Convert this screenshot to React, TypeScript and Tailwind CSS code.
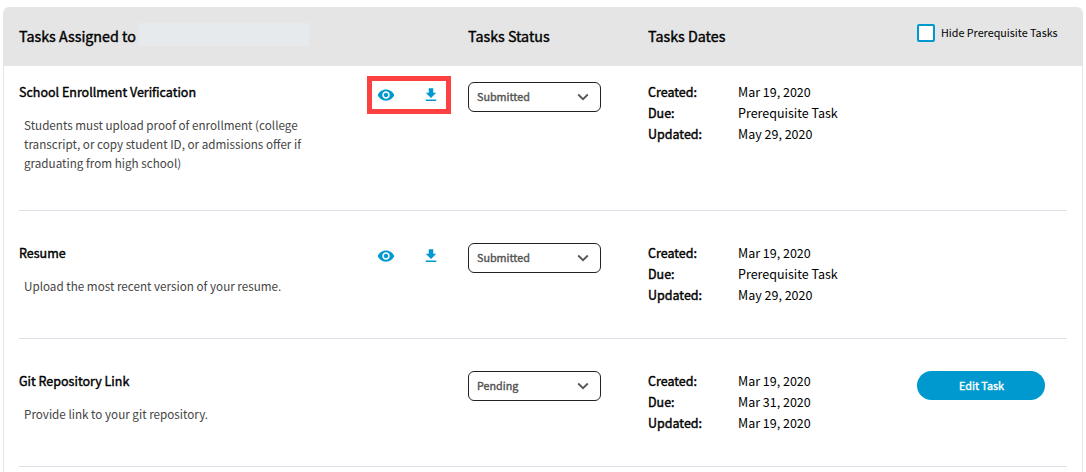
import React from "react";

type Task = {
  title: string;
  description: string;
  status: string;
  due: string;
  updated: string;
  files?: boolean;
  highlighted?: boolean;
  editable?: boolean;
};

const tasks: Task[] = [
  {
    title: "School Enrollment Verification",
    description:
      "Students must upload proof of enrollment (college transcript, or copy student ID, or admissions offer if graduating from high school)",
    status: "Submitted",
    due: "Prerequisite Task",
    updated: "May 29, 2020",
    files: true,
    highlighted: true,
  },
  {
    title: "Resume",
    description: "Upload the most recent version of your resume.",
    status: "Submitted",
    due: "Prerequisite Task",
    updated: "May 29, 2020",
    files: true,
  },
  {
    title: "Git Repository Link",
    description: "Provide link to your git repository.",
    status: "Pending",
    due: "Mar 31, 2020",
    updated: "Mar 19, 2020",
    editable: true,
  },
];

const columns = "grid grid-cols-[449px_180px_269px_150px]";
const strong = "[-webkit-text-stroke:0.4px_currentColor]";

function EyeIcon() {
  return (
    <svg viewBox="0 0 24 24" className="size-[18px]" fill="currentColor">
      <path d="M12 4.5C7 4.5 2.73 7.61 1 12c1.73 4.39 6 7.5 11 7.5s9.27-3.11 11-7.5c-1.73-4.39-6-7.5-11-7.5zM12 17c-2.76 0-5-2.24-5-5s2.24-5 5-5 5 2.24 5 5-2.24 5-5 5zm0-8c-1.66 0-3 1.34-3 3s1.34 3 3 3 3-1.34 3-3-1.34-3-3-3z" />
    </svg>
  );
}

function DownloadIcon() {
  return (
    <svg viewBox="0 0 24 24" className="size-[18px]" fill="currentColor">
      <path d="M19 9h-4V3H9v6H5l7 7 7-7zM5 18v2h14v-2H5z" />
    </svg>
  );
}

function StatusSelect({ value }: { value: string }) {
  return (
    <button className="flex h-[30px] w-[133px] items-center justify-between rounded-[6px] border border-[#222] bg-white pr-[11px] pl-2 text-[10.75px] leading-none text-[#555]">
      <span className={strong}>{value}</span>
      <svg viewBox="0 0 12 8" className="h-2 w-3" fill="none" stroke="#555" strokeWidth="1.8">
        <path d="M1.2 1.5 6 6.2 10.8 1.5" />
      </svg>
    </button>
  );
}

function DateRow({ label, value }: { label: string; value: string }) {
  return (
    <div className="flex h-[21px] items-center">
      <dt className={`w-[90px] ${strong}`}>{label}</dt>
      <dd>{value}</dd>
    </div>
  );
}

function TaskRow({ task, first }: { task: Task; first: boolean }) {
  return (
    <section
      className={`mx-[15px] border-b border-[#dce0e8] ${columns} ${first ? "h-[145px] pt-4" : "h-[128px] pt-8"}`}
    >
      <div className="flex">
        <div className="w-[358px]">
          <h3 className={`h-5 text-[12.5px] leading-[19px] ${strong}`}>{task.title}</h3>
          <p className="mt-[13px] ml-[5px] w-[290px] text-[11.68px] leading-[19px] text-[#444]">
            {task.description}
          </p>
        </div>
        {task.files && (
          <div className="relative flex h-[26px] items-center gap-[27px] self-start text-[#0099cf]">
            <button aria-label="View">
              <EyeIcon />
            </button>
            <button aria-label="Download">
              <DownloadIcon />
            </button>
            {task.highlighted && (
              <span className="absolute -top-[6px] -left-[10px] h-[38px] w-[84px] border-[5px] border-[#fd4040]" />
            )}
          </div>
        )}
      </div>
      <div>
        <StatusSelect value={task.status} />
      </div>
      <dl className="text-[12.5px] leading-none">
        <DateRow label="Created:" value="Mar 19, 2020" />
        <DateRow label="Due:" value={task.due} />
        <DateRow label="Updated:" value={task.updated} />
      </dl>
      <div>
        {task.editable && (
          <button
            className={`flex h-[29px] w-[128px] items-center justify-center rounded-full bg-[#0099cf] pt-px pl-px text-[10.75px] leading-none text-white ${strong}`}
          >
            Edit Task
          </button>
        )}
      </div>
    </section>
  );
}

export default function App() {
  return (
    <main className="h-[472px] w-[1086px] overflow-hidden bg-white pt-[7px] pl-[3px] font-['Noto_Sans_CJK_JP',sans-serif] text-black">
      <div className="h-[480px] w-[1080px] overflow-hidden rounded-t-[6px] border border-t-0 border-[#e5e5e5]">
        <header className={`h-[59px] bg-[#e5e5e5] px-[15px] text-[14.3px] ${columns}`}>
          <div className="flex pt-4">
            <h2 className={`w-[120px] leading-[26px] ${strong}`}>Tasks Assigned to</h2>
            <div className="h-[23px] w-[170px] bg-[#e6eaed]" />
          </div>
          <h2 className={`pt-4 leading-[26px] ${strong}`}>Tasks Status</h2>
          <h2 className={`pt-4 leading-[26px] ${strong}`}>Tasks Dates</h2>
          <label className="mt-[17px] flex h-[18px] items-center gap-[6px] self-start text-[10.75px] whitespace-nowrap">
            <span className="size-[18px] rounded-[2px] border-2 border-[#0099cf] bg-white" />
            Hide Prerequisite Tasks
          </label>
        </header>
        {tasks.map((task, i) => (
          <TaskRow key={task.title} task={task} first={i === 0} />
        ))}
      </div>
    </main>
  );
}
